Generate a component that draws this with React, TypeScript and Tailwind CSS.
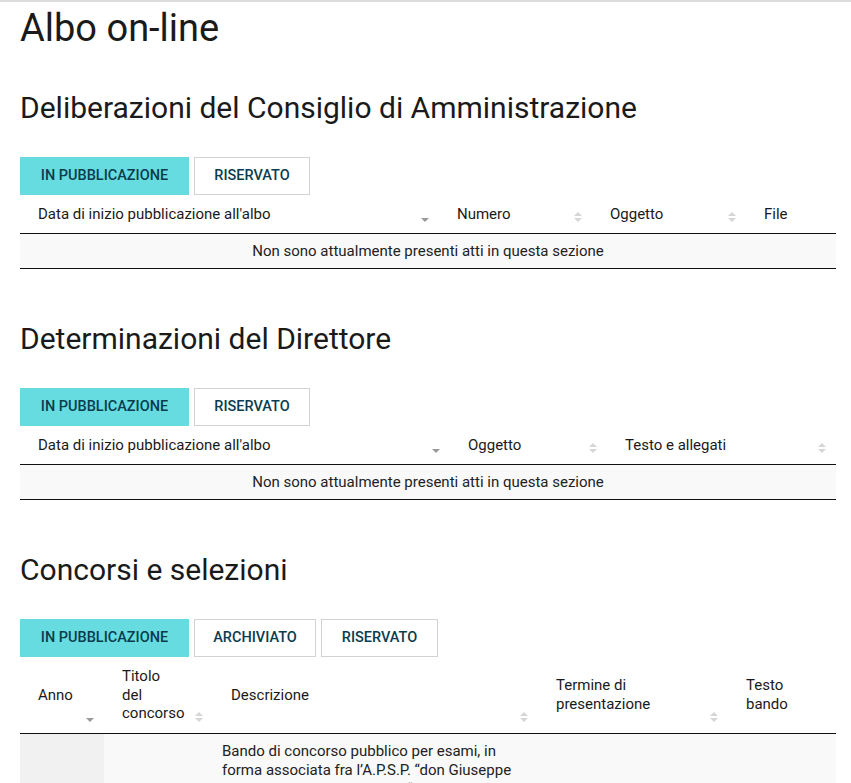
import React from "react"

type Sort = "none" | "desc" | "both"

function SortIcon({ mode }: { mode: Sort }) {
    if (mode === "none") return null
    return (
        <svg
            width="8"
            height="12"
            viewBox="0 0 8 12"
            className="absolute right-[10px] bottom-[10px]"
        >
            {mode === "both" && <polygon points="0,5 4,1 8,5" fill="#d6d6d6" />}
            <polygon points="0,7 8,7 4,11" fill={mode === "desc" ? "#9a9a9a" : "#d6d6d6"} />
        </svg>
    )
}

type Col = { label: React.ReactNode; width: number; sort: Sort }

function Tabs({ items }: { items: { label: string; width: number }[] }) {
    return (
        <div className="flex gap-[5px]">
            {items.map((it, i) => (
                <button
                    key={it.label}
                    style={{ width: it.width }}
                    className={
                        i === 0
                            ? "h-[38px] border border-[#66dce0] bg-[#66dce0] text-[14.5px] font-medium text-[#0b3c4e] uppercase"
                            : "h-[38px] border border-[#d2d2d2] bg-white text-[14.5px] font-medium text-[#0b3c4e] uppercase"
                    }
                >
                    {it.label}
                </button>
            ))}
        </div>
    )
}

function HeadRow({ cols, lead }: { cols: Col[]; lead: string }) {
    return (
        <>
            <colgroup>
                {cols.map((c, i) => (
                    <col key={i} style={{ width: c.width }} />
                ))}
            </colgroup>
            <thead>
                <tr>
                    {cols.map((c, i) => (
                        <th
                            key={i}
                            className={
                                "relative border-b border-[#111] pl-[18px] pr-[30px] py-[10px] text-left align-middle text-[15px] font-normal text-[#1a1a1a] " +
                                lead
                            }
                        >
                            {c.label}
                            <SortIcon mode={c.sort} />
                        </th>
                    ))}
                </tr>
            </thead>
        </>
    )
}

function EmptyTable({ cols }: { cols: Col[] }) {
    return (
        <table className="w-full table-fixed">
            <HeadRow cols={cols} lead="leading-[18px]" />
            <tbody>
                <tr>
                    <td
                        colSpan={cols.length}
                        className="border-b border-[#111] bg-[#f9f9f9] px-[10px] py-2 text-center text-[15px] leading-[18px] text-[#222]"
                    >
                        Non sono attualmente presenti atti in questa sezione
                    </td>
                </tr>
            </tbody>
        </table>
    )
}

const delibCols: Col[] = [
    { label: "Data di inizio pubblicazione all'albo", width: 419, sort: "desc" },
    { label: "Numero", width: 153, sort: "both" },
    { label: "Oggetto", width: 154, sort: "both" },
    { label: "File", width: 90, sort: "none" },
]

const determCols: Col[] = [
    { label: "Data di inizio pubblicazione all'albo", width: 430, sort: "desc" },
    { label: "Oggetto", width: 157, sort: "both" },
    { label: "Testo e allegati", width: 229, sort: "both" },
]

const concorsiCols: Col[] = [
    { label: "Anno", width: 84, sort: "desc" },
    { label: <>Titolo<br />del<br />concorso</>, width: 109, sort: "both" },
    { label: "Descrizione", width: 325, sort: "both" },
    { label: <>Termine di<br />presentazione</>, width: 190, sort: "both" },
    { label: <>Testo<br />bando</>, width: 108, sort: "none" },
]

export default function App() {
    return (
        <div className="min-h-screen border-t-2 border-[#dcdcdc] bg-white pl-5 pr-[15px] font-['Roboto',sans-serif] text-[#1a1a1a]">
            <h1 className="mt-[4px] text-[38px] leading-[44px] font-normal">Albo on-line</h1>

            <div className="mt-[40px] flex flex-col gap-[52px]">
                <section>
                    <h2 className="text-[30px] leading-[36px] font-normal">
                        Deliberazioni del Consiglio di Amministrazione
                    </h2>
                    <div className="mt-[31px]">
                        <Tabs items={[{ label: "In pubblicazione", width: 169 }, { label: "Riservato", width: 116 }]} />
                        <EmptyTable cols={delibCols} />
                    </div>
                </section>

                <section>
                    <h2 className="text-[30px] leading-[36px] font-normal">Determinazioni del Direttore</h2>
                    <div className="mt-[31px]">
                        <Tabs items={[{ label: "In pubblicazione", width: 169 }, { label: "Riservato", width: 116 }]} />
                        <EmptyTable cols={determCols} />
                    </div>
                </section>

                <section>
                    <h2 className="text-[30px] leading-[36px] font-normal">Concorsi e selezioni</h2>
                    <div className="mt-[31px]">
                        <Tabs
                            items={[
                                { label: "In pubblicazione", width: 169 },
                                { label: "Archiviato", width: 122 },
                                { label: "Riservato", width: 117 },
                            ]}
                        />
                        <table className="w-full table-fixed">
                            <HeadRow cols={concorsiCols} lead="leading-[18.5px]" />
                            <tbody>
                                <tr className="bg-[#f9f9f9] text-[15px] leading-[19px] text-[#222]">
                                    <td className="bg-[#f1f1f1] px-[10px] py-2 align-middle">2024</td>
                                    <td className="px-[10px] py-2 align-middle"></td>
                                    <td className="pl-[9px] pr-[10px] py-2 align-middle">
                                        Bando di concorso pubblico per esami, in
                                        <br />
                                        forma associata fra l’A.P.S.P. “don Giuseppe
                                        <br />
                                        Cova” di Vallarsa e l’A.P.S.P. “Ubaldo
                                        <br />
                                        Campagnola” di Avio, per la copertura di
                                        <br />
                                        n. 1 posto a tempo indeterminato di
                                        <br />
                                        Infermiere (cat. C, livello evoluto)
                                    </td>
                                    <td className="px-[10px] py-2 align-middle"></td>
                                    <td className="px-[10px] py-2 text-center align-middle">
                                        <a className="text-[#d9541e]">
                                            Scarica
                                            <br />
                                            il bando
                                        </a>
                                    </td>
                                </tr>
                            </tbody>
                        </table>
                    </div>
                </section>
            </div>
        </div>
    )
}
